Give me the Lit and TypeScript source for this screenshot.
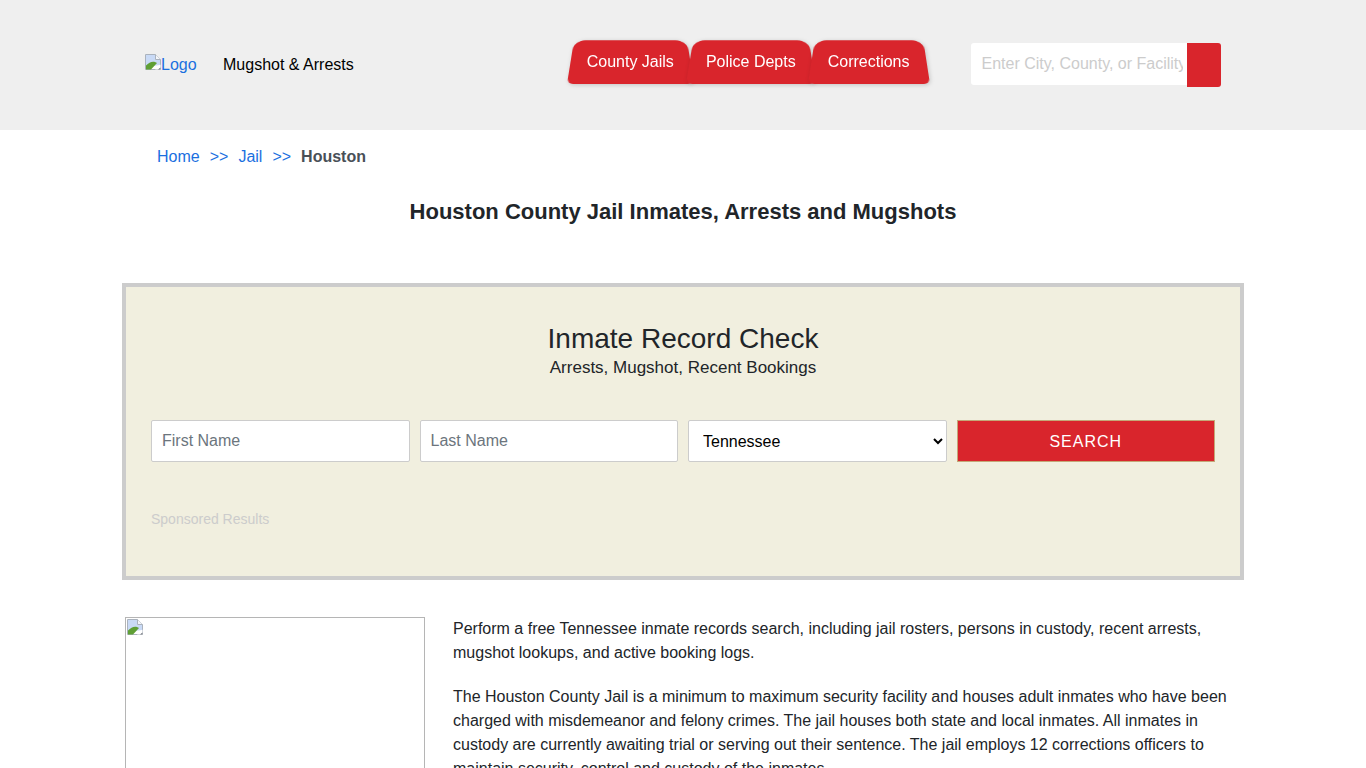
import { LitElement, css, html } from "lit";
import { customElement } from "lit/decorators.js";

const brokenIcon = html`
  <svg class="broken" width="16" height="16" viewBox="0 0 16 16">
    <path d="M.5.5h10l5 5v10H.5z" fill="#fff" stroke="#aab2bd" />
    <path d="M1 1h9.500v5H15v5L1 13z" fill="#c9daf6" />
    <path d="M1 15.500v-4c3-3 6-4.500 9-3.500l2 1-6 6.500z" fill="#5f9f35" />
    <path d="M10.500 .5v5h5" fill="#f4f6fa" stroke="#aab2bd" />
    <path d="M10 15.500l5.500-5v5z" fill="#fff" />
    <path d="M13 15.500h2.500v-2z" fill="#6b7078" />
  </svg>
`;

@customElement("app-root")
export class AppRoot extends LitElement {
  static styles = css`
    :host {
      display: block;
      height: 768px;
      overflow: hidden;
      background: #fff;
      color: #212529;
      font: 16px/24px "Liberation Sans", Arial, sans-serif;
    }

    a {
      color: #1a6fdf;
      text-decoration: none;
    }

    .top {
      height: 130px;
      box-sizing: border-box;
      background: #efefef;
      padding: 40px 145px 0;
      display: flex;
      align-items: flex-start;
    }

    .logo {
      display: flex;
      height: 48px;
      width: 52px;
      line-height: 50px;
    }

    .broken {
      display: block;
      flex: none;
    }

    .logo .broken {
      margin-top: 14px;
    }

    .brand {
      color: #000;
      margin-left: 26px;
      line-height: 50px;
    }

    .tabs {
      display: flex;
      margin-left: 217px;
      height: 44px;
    }

    .tab {
      position: relative;
      z-index: 0;
      color: #fff;
      padding: 0 16px;
      line-height: 44px;
      filter: drop-shadow(1px 1px 2px rgb(0 0 0 / 0.18));
    }

    .tab::before {
      content: "";
      position: absolute;
      z-index: -1;
      inset: -11px -4px 0 -4px;
      background: #d9252c;
      border-radius: 13px 13px 6px 6px;
      transform: perspective(200px) rotateX(26.8deg);
      transform-origin: bottom;
    }

    .search {
      display: flex;
      margin-left: 45px;
      margin-top: 3px;
    }

    .search input {
      width: 216px;
      height: 42px;
      box-sizing: border-box;
      border: 0;
      border-radius: 3px 0 0 3px;
      padding: 0 4px 0 11px;
      background: #fff;
      font: inherit;
      outline: 0;
    }

    .search input::placeholder {
      color: #ccc;
      opacity: 1;
    }

    .search button {
      width: 34px;
      height: 44px;
      border: 0;
      border-radius: 0 3px 3px 0;
      background: #d9252c;
    }

    main {
      width: 1116px;
      margin: 0 auto;
    }

    .crumbs {
      display: flex;
      gap: 10px;
      padding: 15px 0 0 32px;
      color: #495057;
    }

    h1 {
      margin: 30px 0 0;
      font-size: 22px;
      line-height: 26px;
      font-weight: 700;
      text-align: center;
    }

    .check {
      margin: 58px -3px 0;
      height: 297px;
      box-sizing: border-box;
      border: 4px solid #ccc;
      background: #f1efdf;
      padding: 35px 25px 0;
      text-align: center;
    }

    .check h2 {
      margin: 0;
      font-size: 28px;
      line-height: 34px;
      font-weight: 400;
    }

    .check p {
      margin: 0;
      font-size: 17px;
      line-height: 24px;
    }

    form {
      display: grid;
      grid-template-columns: repeat(4, 1fr);
      gap: 10px;
      margin-top: 40px;
    }

    form input,
    form select {
      width: 100%;
      height: 42px;
      box-sizing: border-box;
      border: 1px solid #ccc;
      border-radius: 2px;
      background: #fff;
      font: inherit;
      outline: 0;
    }

    form input {
      padding: 0 10px;
    }

    form select {
      padding: 0 10px;
      color: #000;
    }

    form input::placeholder {
      color: #6c757d;
      opacity: 1;
    }

    form button {
      height: 42px;
      border: 1px solid #c4a878;
      border-radius: 0;
      padding: 2px 0 0;
      background: #d9252c;
      color: #fff;
      font: inherit;
      letter-spacing: 1px;
    }

    .sponsored {
      margin-top: 46px;
      font-size: 14px;
      line-height: 22px;
      color: #ccc;
      text-align: left;
    }

    .info {
      display: flex;
      gap: 28px;
      margin-top: 37px;
    }

    .photo {
      flex: none;
      width: 300px;
      height: 225px;
      box-sizing: border-box;
      border: 1px solid #b5b5b5;
      padding: 1px;
    }

    .copy p {
      margin: 0 0 20px;
    }
  `;

  render() {
    return html`
      <header class="top">
        <a class="logo" href="#">${brokenIcon}<span>Logo</span></a>
        <a class="brand" href="#">Mugshot &amp; Arrests</a>
        <nav class="tabs">
          <a class="tab" href="#">County Jails</a>
          <a class="tab" href="#">Police Depts</a>
          <a class="tab" href="#">Corrections</a>
        </nav>
        <div class="search">
          <input placeholder="Enter City, County, or Facility" />
          <button aria-label="Search"></button>
        </div>
      </header>
      <main>
        <div class="crumbs">
          <a href="#">Home</a><a href="#">&gt;&gt;</a><a href="#">Jail</a
          ><a href="#">&gt;&gt;</a><b>Houston</b>
        </div>
        <h1>Houston County Jail Inmates, Arrests and Mugshots</h1>
        <section class="check">
          <h2>Inmate Record Check</h2>
          <p>Arrests, Mugshot, Recent Bookings</p>
          <form>
            <input placeholder="First Name" />
            <input placeholder="Last Name" />
            <select><option>Tennessee</option></select>
            <button type="button">SEARCH</button>
          </form>
          <div class="sponsored">Sponsored Results</div>
        </section>
        <section class="info">
          <div class="photo">${brokenIcon}</div>
          <div class="copy">
            <p>
              Perform a free Tennessee inmate records search, including jail
              rosters, persons in custody, recent arrests, mugshot lookups, and
              active booking logs.
            </p>
            <p>
              The Houston County Jail is a minimum to maximum security facility
              and houses adult inmates who have been charged with misdemeanor
              and felony crimes. The jail houses both state and local inmates.
              All inmates in custody are currently awaiting trial or serving
              out their sentence. The jail employs 12 corrections officers to
              maintain security, control and custody of the inmates.
            </p>
          </div>
        </section>
      </main>
    `;
  }
}
